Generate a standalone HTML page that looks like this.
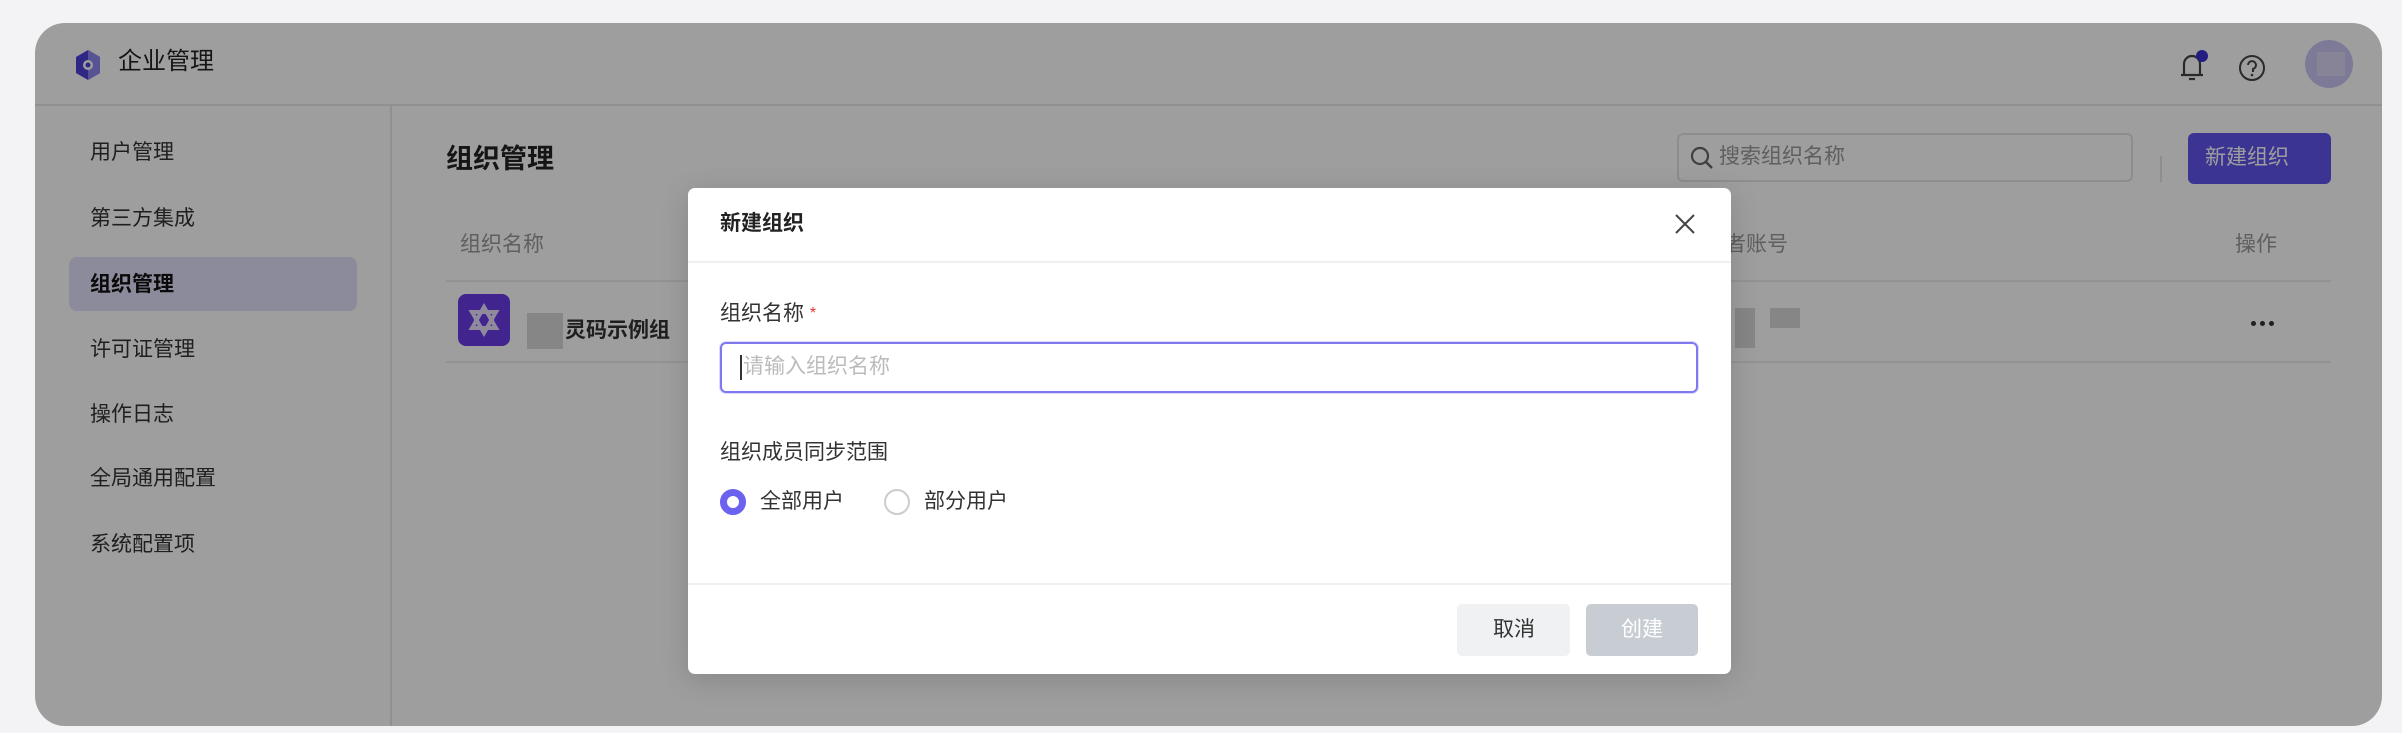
<!DOCTYPE html>
<html><head><meta charset="utf-8"><style>
*{box-sizing:border-box;margin:0;padding:0}
body{width:2402px;height:733px;background:#f3f3f5;font-family:"Liberation Sans","Noto Sans CJK SC",sans-serif;position:relative;overflow:hidden;color:#222}
.win{position:absolute;left:35px;top:23px;width:2347px;height:703px;background:#fff;border-radius:30px;overflow:hidden}
.hdr{position:absolute;left:0;top:0;right:0;height:83px;border-bottom:2px solid #e8e8ec}
.abs{position:absolute}
.side{position:absolute;left:0;top:83px;width:357px;bottom:0;border-right:2px solid #e8e8ec}
.si{position:absolute;left:55px;font-size:21px;color:#333;line-height:30px}
.sel{position:absolute;left:34px;top:151px;width:288px;height:54px;background:#e2e0fb;border-radius:8px}
.ov{position:absolute;inset:0;background:rgba(0,0,0,0.38)}
.modal{position:absolute;left:688px;top:188px;width:1043px;height:486px;background:#fff;border-radius:7px;box-shadow:0 6px 30px rgba(0,0,0,.15)}
.t{position:absolute;font-size:21px;line-height:30px;white-space:nowrap}
</style></head><body>
<div class="win">
 <div class="hdr">
  <svg class="abs" style="left:40px;top:26px" width="26" height="32" viewBox="0 0 26 32"><path d="M13 1 L25 8 L25 24 L13 31 L1 24 L1 8 Z" fill="#4c3fd6"/><path d="M13 1 L25 8 L25 24 L13 31 Z" fill="#8f86f0"/><circle cx="13" cy="16" r="5" fill="#fff"/><circle cx="13" cy="16" r="2.5" fill="#4c3fd6"/></svg>
  <div class="t" style="left:83px;top:24px;font-size:24px;color:#222">企业管理</div>
  <svg class="abs" style="left:2140px;top:26px" width="34" height="36" viewBox="0 0 34 36"><path d="M9 26 V15 a8 8 0 0 1 16 0 V26 Z M6 26 H28 M14 30 H20" fill="none" stroke="#444" stroke-width="2.2"/><circle cx="27" cy="7" r="6" fill="#3a2fd0"/></svg>
  <svg class="abs" style="left:2202px;top:30px" width="30" height="30" viewBox="0 0 30 30"><circle cx="15" cy="15" r="12" fill="none" stroke="#444" stroke-width="2"/><path d="M11 12 a4 4 0 1 1 5 4 v3" fill="none" stroke="#444" stroke-width="2"/><circle cx="15" cy="22" r="1.3" fill="#444"/></svg>
  <div class="abs" style="left:2270px;top:17px;width:48px;height:48px;border-radius:50%;background:#c8c6f4"></div>
  <div class="abs" style="left:2282px;top:29px;width:28px;height:24px;background:#d8d6f2"></div>
 </div>
 <div class="side">
  <div class="sel"></div>
  <div class="si" style="top:32px">用户管理</div>
  <div class="si" style="top:98px">第三方集成</div>
  <div class="si" style="top:164px;font-weight:bold;color:#111">组织管理</div>
  <div class="si" style="top:229px">许可证管理</div>
  <div class="si" style="top:294px">操作日志</div>
  <div class="si" style="top:358px">全局通用配置</div>
  <div class="si" style="top:424px">系统配置项</div>
 </div>
 <div class="t" style="left:411px;top:118px;font-size:27px;font-weight:bold;line-height:36px">组织管理</div>
 <div class="abs" style="left:1642px;top:110px;width:456px;height:49px;border:2px solid #e4e4e8;border-radius:6px"></div>
 <svg class="abs" style="left:1654px;top:122px" width="26" height="26" viewBox="0 0 26 26"><circle cx="11" cy="11" r="8" fill="none" stroke="#666" stroke-width="2.2"/><path d="M17 17 L23 23" stroke="#666" stroke-width="2.4"/></svg>
 <div class="t" style="left:1684px;top:119px;color:#999">搜索组织名称</div>
 <div class="abs" style="left:2125px;top:133px;width:2px;height:26px;background:#e4e4e8"></div>
 <div class="abs" style="left:2153px;top:110px;width:143px;height:51px;background:#5f55ee;border-radius:6px"></div>
 <div class="t" style="left:2170px;top:120px;color:#fff">新建组织</div>
 <div class="t" style="left:425px;top:207px;color:#999">组织名称</div>
 <div class="t" style="left:1690px;top:207px;color:#999">者账号</div>
 <div class="t" style="left:2200px;top:207px;color:#999">操作</div>
 <div class="abs" style="left:411px;top:257px;width:1885px;height:2px;background:#eeeef0"></div>
 <div class="abs" style="left:423px;top:271px;width:52px;height:52px;border-radius:8px;background:#6a3be6"></div>
 <svg class="abs" style="left:431px;top:279px" width="36" height="36" viewBox="0 0 36 36"><path d="M18 5 L30 26 L6 26 Z M18 31 L6 10 L30 10 Z" fill="none" stroke="#fff" stroke-width="4" opacity=".85"/></svg>
 <div class="abs" style="left:492px;top:290px;width:36px;height:36px;background:#d8d8d8"></div>
 <div class="t" style="left:530px;top:293px;font-weight:bold;color:#333">灵码示例组</div>
 <div class="abs" style="left:1700px;top:285px;width:20px;height:40px;background:#d8d8d8"></div>
 <div class="abs" style="left:1735px;top:285px;width:30px;height:20px;background:#d8d8d8"></div>
 <div class="abs" style="left:2216px;top:298px;width:5px;height:5px;border-radius:50%;background:#333;box-shadow:9px 0 0 #333,18px 0 0 #333"></div>
 <div class="abs" style="left:411px;top:338px;width:1885px;height:2px;background:#eeeef0"></div>
 <div class="ov"></div>
</div>
<div class="modal">
 <div class="t" style="left:32px;top:21px;font-weight:bold;color:#222">新建组织</div>
 <svg class="abs" style="left:985px;top:24px" width="24" height="24" viewBox="0 0 24 24"><path d="M3 3 L21 21 M21 3 L3 21" stroke="#444" stroke-width="2"/></svg>
 <div class="abs" style="left:0;top:73px;width:100%;height:2px;background:#eef0f3"></div>
 <div class="t" style="left:32px;top:111px;color:#333">组织名称 <span style="color:#e33;font-size:16px;vertical-align:top">*</span></div>
 <div class="abs" style="left:32px;top:154px;width:978px;height:51px;border:2px solid #8078f0;border-radius:6px;box-shadow:0 0 0 1px #dcd9fb"></div>
 <div class="abs" style="left:52px;top:167px;width:2px;height:25px;background:#333"></div>
 <div class="t" style="left:55px;top:164px;color:#bbb">请输入组织名称</div>
 <div class="t" style="left:32px;top:250px;color:#333">组织成员同步范围</div>
 <div class="abs" style="left:32px;top:301px;width:26px;height:26px;border-radius:50%;border:7px solid #6b62f0;background:#fff"></div>
 <div class="t" style="left:72px;top:299px;color:#333">全部用户</div>
 <div class="abs" style="left:196px;top:301px;width:26px;height:26px;border-radius:50%;border:2px solid #ccc"></div>
 <div class="t" style="left:236px;top:299px;color:#333">部分用户</div>
 <div class="abs" style="left:0;top:395px;width:100%;height:2px;background:#eef0f3"></div>
 <div class="abs" style="left:769px;top:416px;width:113px;height:52px;background:#f0f1f3;border-radius:5px"></div>
 <div class="t" style="left:805px;top:427px;color:#333">取消</div>
 <div class="abs" style="left:898px;top:416px;width:112px;height:52px;background:#c8ccd3;border-radius:5px"></div>
 <div class="t" style="left:933px;top:427px;color:#fff">创建</div>
</div>
</body></html>
